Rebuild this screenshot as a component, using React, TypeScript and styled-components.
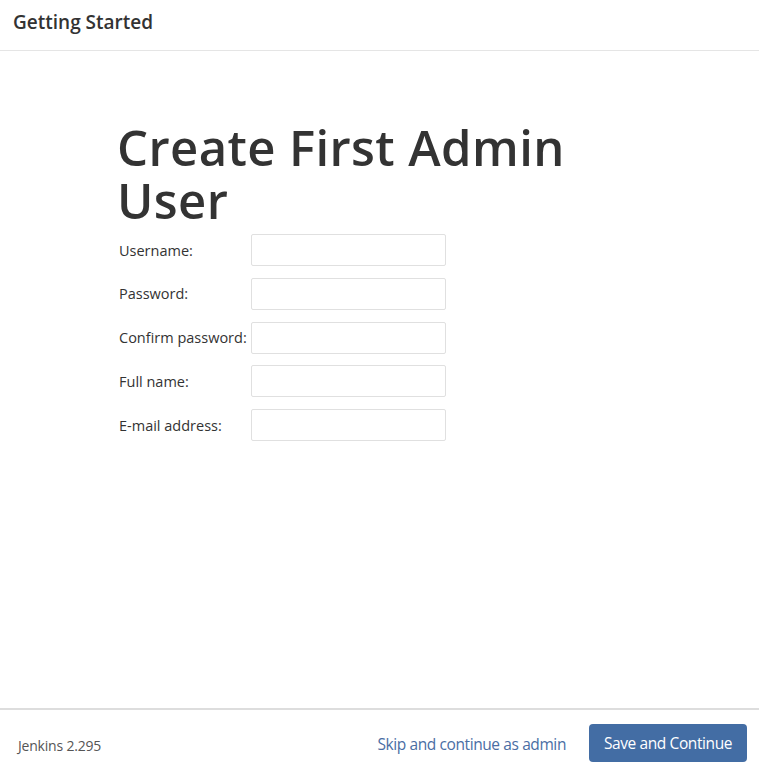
import React from "react";
import styled, { createGlobalStyle } from "styled-components";

const GlobalStyle = createGlobalStyle`
  html, body {
    margin: 0;
    padding: 0;
    background: #fff;
    font-family: "Open Sans", "Noto Sans", sans-serif;
    color: #333;
  }
  #root {
    height: 100vh;
  }
`;

const Wizard = styled.div`
  height: 100vh;
  display: flex;
  flex-direction: column;
  overflow: hidden;
`;

const Header = styled.header`
  height: 50px;
  border-bottom: 1px solid #e5e5e5;
  display: flex;
  align-items: center;
  padding: 0 13px;
  flex-shrink: 0;
`;

const HeaderTitle = styled.h4`
  margin: 0 0 6px;
  font-size: 19px;
  font-weight: 600;
  color: #333;
  letter-spacing: 0;
`;

const Body = styled.main`
  flex: 1;
  padding: 70px 0 0 117px;
`;

const Title = styled.h1`
  margin: 0 0 7px;
  width: 480px;
  font-size: 49px;
  font-weight: 600;
  line-height: 53px;
  color: #333;
  letter-spacing: 0.4px;
`;

const Form = styled.form`
  display: flex;
  flex-direction: column;
  gap: 11.75px;
`;

const Row = styled.div`
  display: flex;
  align-items: center;
`;

const Label = styled.label`
  width: 134px;
  padding-left: 2px;
  box-sizing: border-box;
  font-size: 14.5px;
  color: #333;
  letter-spacing: 0;
  white-space: nowrap;
`;

const Input = styled.input`
  width: 195px;
  height: 32px;
  box-sizing: border-box;
  border: 1px solid #e0e0e0;
  border-radius: 2px;
  padding: 4px 8px;
  font-size: 14px;
  background: #fff;
  outline: none;
`;

const Footer = styled.footer`
  height: 61px;
  border-top: 2px solid #ddd;
  display: flex;
  align-items: center;
  padding: 6px 12px 0 18px;
  flex-shrink: 0;
  box-sizing: border-box;
`;

const Version = styled.span`
  font-size: 14px;
  color: #555;
  letter-spacing: -0.2px;
  margin-top: 6px;
  flex: 1;
`;

const LinkButton = styled.a`
  font-size: 15.5px;
  color: #4a6ea4;
  text-decoration: none;
  letter-spacing: -0.4px;
  margin-right: 23px;
  margin-top: 2px;
  cursor: pointer;
`;

const PrimaryButton = styled.button`
  height: 38px;
  width: 158px;
  border: none;
  border-radius: 4px;
  background: #436da4;
  color: #fff;
  font-family: inherit;
  font-size: 15.5px;
  letter-spacing: -0.4px;
  cursor: pointer;
`;

const fields = [
  { id: "username", label: "Username:", type: "text" },
  { id: "password1", label: "Password:", type: "password" },
  { id: "password2", label: "Confirm password:", type: "password" },
  { id: "fullname", label: "Full name:", type: "text" },
  { id: "email", label: "E-mail address:", type: "email" },
];

const App: React.FC = () => {
  return (
    <>
      <GlobalStyle />
      <Wizard>
        <Header>
          <HeaderTitle>Getting Started</HeaderTitle>
        </Header>
        <Body>
          <Title>Create First Admin User</Title>
          <Form onSubmit={(e) => e.preventDefault()}>
            {fields.map((f) => (
              <Row key={f.id}>
                <Label htmlFor={f.id}>{f.label}</Label>
                <Input id={f.id} name={f.id} type={f.type} />
              </Row>
            ))}
          </Form>
        </Body>
        <Footer>
          <Version>Jenkins 2.295</Version>
          <LinkButton>Skip and continue as admin</LinkButton>
          <PrimaryButton type="button">Save and Continue</PrimaryButton>
        </Footer>
      </Wizard>
    </>
  );
};

export default App;
